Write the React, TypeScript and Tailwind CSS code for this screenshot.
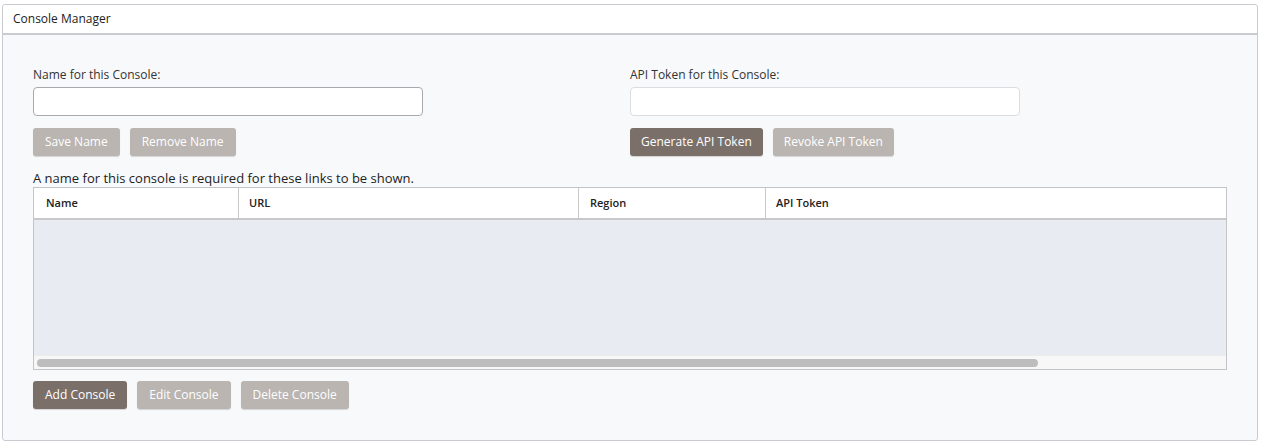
import React from "react";

const btnBase =
  "h-[28px] rounded-[3px] text-[12px] text-white shadow-[0_1px_1px_rgba(0,0,0,0.15)]";
const btnDark = `${btnBase} px-[12px] bg-[#7b7069]`;
const btnLight = `${btnBase} px-[12px] bg-[#bab5b1]`;

export default function App() {
  return (
    <div
      className="w-[1262px] h-[444px] bg-white pt-[4px] pl-[2px] pr-[4px]"
      style={{ fontFamily: '"Open Sans", "Noto Sans", sans-serif' }}
    >
      <div className="h-[437px] border border-[#c9cbd1] rounded-[3px] bg-[#f8f9fb] flex flex-col">
        {/* header */}
        <div className="h-[30px] bg-white border-b-2 border-[#c9cbd1] rounded-t-[3px] flex items-center pl-[10px]">
          <span className="text-[12px] text-[#222]">Console Manager</span>
        </div>

        <div className="pl-[30px] pr-[30px] pt-[32px] flex flex-col">
          <div className="flex">
            <div className="w-[597px] flex flex-col">
              <label className="text-[12px] text-[#333] leading-[16px]">Name for this Console:</label>
              <input className="mt-[4px] w-[390px] h-[29px] bg-white border border-[#a9a9ad] rounded-[4px] outline-none" />
              <div className="flex gap-[10px] mt-[12px]">
                <button className={btnLight}>Save Name</button>
                <button className={btnLight}>Remove Name</button>
              </div>
            </div>
            <div className="flex flex-col">
              <label className="text-[12px] text-[#333] leading-[16px]">API Token for this Console:</label>
              <input
                disabled
                className="mt-[4px] w-[390px] h-[29px] bg-white border border-[#dcdde0] rounded-[4px] outline-none"
              />
              <div className="flex gap-[10px] mt-[12px]">
                <button className={`${btnBase} px-[11px] bg-[#7b7069]`}>Generate API Token</button>
                <button className={`${btnBase} px-[11px] bg-[#bab5b1]`}>Revoke API Token</button>
              </div>
            </div>
          </div>

          <p className="mt-[13px] text-[13px] text-[#222] leading-[18px]">
            A name for this console is required for these links to be shown.
          </p>

          <div className="w-[1194px] h-[183px] border border-[#c4c4c6] bg-[#e8ebf2] flex flex-col">
            <div className="h-[32px] bg-white border-b-2 border-[#c8c8cb] flex text-[11px] font-semibold text-[#222]">
              <div className="w-[205px] border-r border-[#c8c8cb] flex items-center pl-[12px]">Name</div>
              <div className="w-[340px] border-r border-[#c8c8cb] flex items-center pl-[10px]">URL</div>
              <div className="w-[187px] border-r border-[#c8c8cb] flex items-center pl-[11px]">Region</div>
              <div className="flex-1 flex items-center pl-[10px]">API Token</div>
            </div>
            <div className="flex-1" />
            <div className="h-[14px] bg-[#f7f7f7] border-t border-[#ececec] flex items-center pl-[3px]">
              <div className="w-[1001px] h-[8px] rounded-full bg-[#bdbdbd]" />
            </div>
          </div>

          <div className="flex gap-[10px] mt-[11px]">
            <button className={btnDark}>Add Console</button>
            <button className={btnLight}>Edit Console</button>
            <button className={btnLight}>Delete Console</button>
          </div>
        </div>
      </div>
    </div>
  );
}
